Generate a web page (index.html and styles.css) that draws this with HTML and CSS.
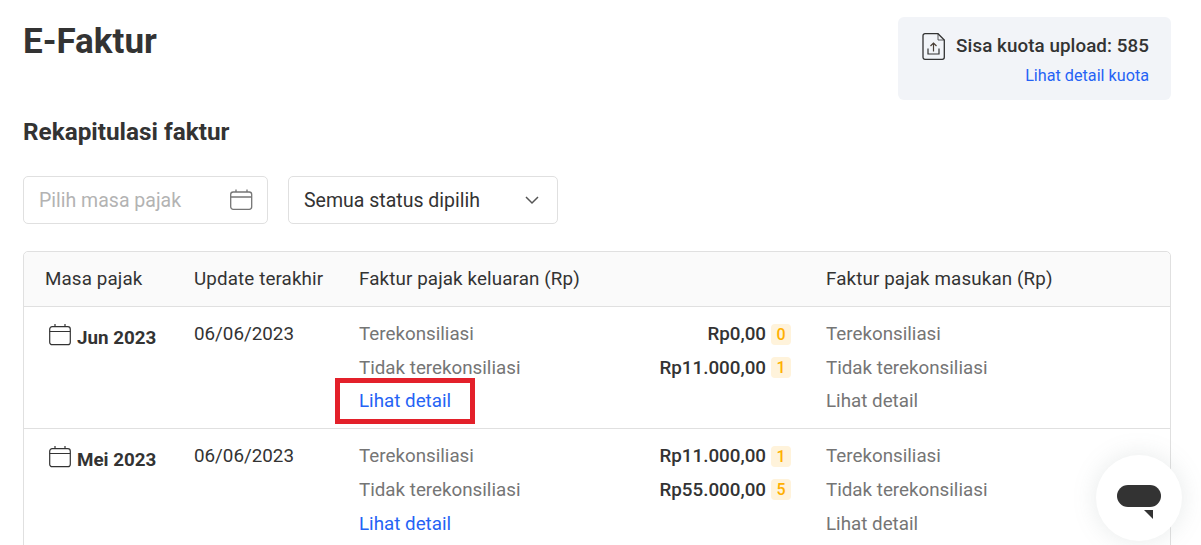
FILE: index.html
```html
<!DOCTYPE html>
<html lang="id">

<head>
    <meta charset="UTF-8">
    <meta name="viewport" content="width=device-width, initial-scale=1.0">
    <title>E-Faktur</title>
    <link rel="stylesheet" href="styles.css">
</head>

<body>
    <div class="page">
        <div class="top">
            <h1 class="title">E-Faktur</h1>
            <div class="quota">
                <div class="quota-main">
                    <svg class="quota-icon" width="23" height="27" viewBox="0 0 23 27" fill="none">
                        <path d="M3 .7h13l6.300 6.300v17.300a2 2 0 0 1-2 2H3a2 2 0 0 1-2-2V2.700a2 2 0 0 1 2-2z" stroke="#333" stroke-width="1.300" />
                        <path d="M16 .7v6.300h6.300" stroke="#333" stroke-width=".8" />
                        <path d="M11.500 18.500V10.500M8.500 13l3-3 3 3" stroke="#4a3f35" stroke-width="1.200" />
                        <path d="M6 15.500v5.500h11v-5.500" stroke="#333" stroke-width="1.200" />
                    </svg>
                    <span>Sisa kuota upload: 585</span>
                </div>
                <a class="quota-link">Lihat detail kuota</a>
            </div>
        </div>

        <h2 class="subtitle">Rekapitulasi faktur</h2>

        <div class="filters">
            <div class="field field-date">
                <span class="placeholder">Pilih masa pajak</span>
                <svg width="24" height="24" viewBox="0 0 24 24" fill="none" stroke="#757575" stroke-width="1.300">
                    <rect x="1.700" y="4" width="21" height="17.300" rx="2.500" />
                    <path d="M1.700 9h21M7 1.500V4M18 1.500V4" />
                </svg>
            </div>
            <div class="field field-status">
                <span>Semua status dipilih</span>
                <svg width="16" height="16" viewBox="0 0 16 16" fill="none" stroke="#555" stroke-width="1.500">
                    <path d="M2 5l6 6 6-6" />
                </svg>
            </div>
        </div>

        <div class="table">
            <div class="row head">
                <div>Masa pajak</div>
                <div>Update terakhir</div>
                <div>Faktur pajak keluaran (Rp)</div>
                <div>Faktur pajak masukan (Rp)</div>
            </div>

            <div class="row">
                <div class="period">
                    <svg width="22" height="22" viewBox="0 0 22 22" fill="none" stroke="#333" stroke-width="1.200">
                        <rect x="0.700" y="2.700" width="20.600" height="18" rx="2.500" />
                        <path d="M0.700 7.500h20.600M6 0v3M16 0v3" />
                    </svg>
                    <b>Jun 2023</b>
                </div>
                <div class="date">06/06/2023</div>
                <div class="lines">
                    <div class="line"><span>Terekonsiliasi</span><span class="amount">Rp0,00</span><span class="badge">0</span></div>
                    <div class="line"><span>Tidak terekonsiliasi</span><span class="amount">Rp11.000,00</span><span class="badge">1</span></div>
                    <div class="line"><a class="link marked">Lihat detail</a></div>
                </div>
                <div class="lines">
                    <div class="line">Terekonsiliasi</div>
                    <div class="line">Tidak terekonsiliasi</div>
                    <div class="line">Lihat detail</div>
                </div>
            </div>

            <div class="row">
                <div class="period">
                    <svg width="22" height="22" viewBox="0 0 22 22" fill="none" stroke="#333" stroke-width="1.200">
                        <rect x="0.700" y="2.700" width="20.600" height="18" rx="2.500" />
                        <path d="M0.700 7.500h20.600M6 0v3M16 0v3" />
                    </svg>
                    <b>Mei 2023</b>
                </div>
                <div class="date">06/06/2023</div>
                <div class="lines">
                    <div class="line"><span>Terekonsiliasi</span><span class="amount">Rp11.000,00</span><span class="badge">1</span></div>
                    <div class="line"><span>Tidak terekonsiliasi</span><span class="amount">Rp55.000,00</span><span class="badge">5</span></div>
                    <div class="line"><a class="link">Lihat detail</a></div>
                </div>
                <div class="lines">
                    <div class="line">Terekonsiliasi</div>
                    <div class="line">Tidak terekonsiliasi</div>
                    <div class="line">Lihat detail</div>
                </div>
            </div>
        </div>
    </div>

    <div class="chat">
        <div class="chat-bubble"></div>
        <div class="chat-tail"></div>
    </div>
</body>

</html>
```

FILE: styles.css
```css
html,
body {
    height: 100%;
    margin: 0;
    overflow: hidden;
}

body {
    background-color: #fff;
    color: #333;
    font-family: Roboto, "Liberation Sans", sans-serif;
    font-size: 18.8px;
}

.page {
    padding: 17px 30px 0 23px;
}

.top {
    display: flex;
    justify-content: space-between;
    align-items: flex-start;
}

.title {
    margin: 3.5px 0 0;
    font-size: 35px;
    line-height: 42px;
    font-weight: 700;
}

.quota {
    width: 273px;
    height: 83px;
    box-sizing: border-box;
    padding: 16px 22px 0 24px;
    background-color: #f2f4f8;
    border-radius: 6px;
    text-align: right;
}

.quota-main {
    display: flex;
    justify-content: space-between;
    align-items: center;
    font-weight: 500;
    line-height: 27px;
    letter-spacing: 0.07px;
}

.quota-main svg {
    margin-top: -1px;
}

.quota-link {
    display: block;
    margin-top: 6px;
    color: #2563f5;
    font-size: 16.2px;
    line-height: 20px;
}

.subtitle {
    margin: 18px 0 0;
    font-size: 24.3px;
    line-height: 28px;
    font-weight: 700;
}

.filters {
    display: flex;
    gap: 20px;
    margin-top: 30px;
}

.field {
    height: 48px;
    box-sizing: border-box;
    display: flex;
    justify-content: space-between;
    align-items: center;
    border: 1px solid #e0e0e0;
    border-radius: 5px;
    padding: 0 15px;
    font-size: 19.5px;
}

.field-date {
    width: 245px;
    padding-right: 14px;
}

.field-status {
    width: 270px;
    padding-right: 17px;
}

.placeholder {
    color: #b3b3b3;
}

.table {
    margin-top: 27px;
    border: 1px solid #e0e0e0;
    border-radius: 5px 5px 0 0;
}

.row {
    display: grid;
    grid-template-columns: 149px 165px 467px 1fr;
    padding: 16px 0 16px 21px;
    border-bottom: 1px solid #e0e0e0;
}

.head {
    height: 55px;
    box-sizing: border-box;
    padding-top: 14px;
    padding-bottom: 0;
    background-color: #fafafa;
    border-radius: 5px 5px 0 0;
    line-height: 26px;
    letter-spacing: 0.12px;
}

.period {
    display: flex;
    align-items: flex-start;
    gap: 6px;
    padding-left: 4px;
}

.period svg {
    margin-top: 1px;
}

.period b {
    margin-top: 3px;
    line-height: 24px;
    font-weight: 700;
}

.date {
    line-height: 22px;
}

.lines {
    display: flex;
    flex-direction: column;
    gap: 11.67px;
    color: #757575;
    line-height: 22px;
    padding-right: 10px;
}

.line {
    display: flex;
    align-items: center;
    height: 22px;
}

.amount {
    margin-left: auto;
    color: #333;
    font-weight: 500;
}

.badge {
    width: 20px;
    height: 21px;
    margin-left: 5px;
    margin-right: 25px;
    background-color: #fff3db;
    border-radius: 4px;
    color: #ffb000;
    font-size: 16px;
    font-weight: 500;
    line-height: 21px;
    text-align: center;
}

.link {
    color: #2563f5;
}

.marked {
    position: relative;
}

/* red frame around the link */
.marked::after {
    content: "";
    position: absolute;
    top: -12px;
    bottom: -12px;
    left: -24px;
    right: -24px;
    border: 5px solid #e3202a;
}

.chat {
    position: fixed;
    left: 1096px;
    top: 455px;
    width: 86px;
    height: 86px;
    border-radius: 50%;
    background-color: #fff;
    box-shadow: 0 0 24px rgba(120, 140, 140, 0.18);
}

.chat-bubble {
    position: absolute;
    left: 21px;
    top: 30px;
    width: 44px;
    height: 22px;
    border-radius: 11px;
    background-color: #333;
}

.chat-tail {
    position: absolute;
    left: 48px;
    top: 55px;
    width: 0;
    height: 0;
    border-top: 9px solid #333;
    border-left: 9px solid transparent;
}
```
